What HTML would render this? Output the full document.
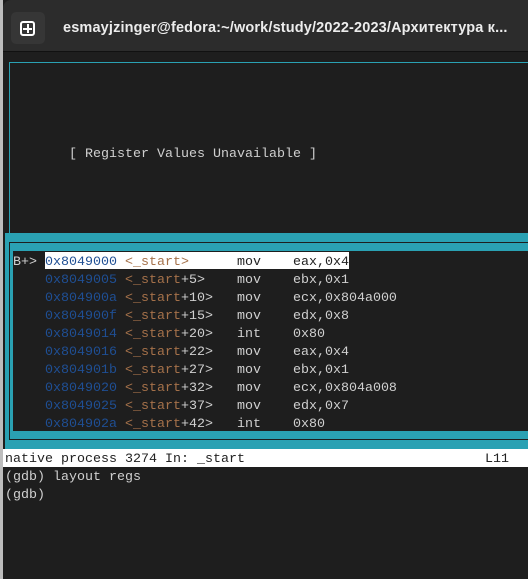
<!DOCTYPE html>
<html><head><meta charset="utf-8"><style>
*{margin:0;padding:0;box-sizing:border-box}
body{width:528px;height:579px;overflow:hidden;background:#1e1e1e;position:relative;font-family:"Liberation Mono",monospace;font-size:13.33px;color:#d0d0d0}
.a{position:absolute}
.ln{position:absolute;height:18px;line-height:18px;white-space:pre;padding-top:2px}
.b{color:#1f4f94}.o{color:#a5714a}
</style></head><body>
<div class="a" style="left:0;top:0;width:3px;height:579px;background:#bdbdbd"></div>
<div class="a" style="left:3px;top:0;width:525px;height:51px;background:#2c2c2c;border-top-left-radius:8px"></div>
<div class="a" style="left:3px;top:51px;width:525px;height:1px;background:#111"></div>
<div class="a" style="left:11px;top:12px;width:34px;height:32px;background:#363636;border-radius:5px"></div>
<div class="a" style="left:20px;top:21px;width:15px;height:15px;border:2px solid #fff;border-radius:3px"></div>
<div class="a" style="left:26.5px;top:24px;width:2px;height:9px;background:#fff"></div>
<div class="a" style="left:23px;top:27.5px;width:9px;height:2px;background:#fff"></div>
<div class="a" style="left:63px;top:20px;font-family:'Liberation Sans','Noto Sans CJK SC',sans-serif;font-size:14.5px;font-weight:bold;letter-spacing:0.15px;color:#ececec;white-space:nowrap">esmayjzinger@fedora:~/work/study/2022-2023/Архитектура к...</div>
<div class="a" style="left:9px;top:62px;width:530px;height:180px;border:1px solid #2aa1b3"></div>
<div class="ln" style="left:69px;top:144px">[ Register Values Unavailable ]</div>
<div class="a" style="left:5px;top:233px;width:523px;height:216px;background:#2aa1b3"></div>
<div class="a" style="left:9px;top:242px;width:530px;height:198px;border:1px solid #1e1e1e"></div>
<div class="a" style="left:13px;top:251px;width:515px;height:180px;background:#1e1e1e"></div>
<div class="a" style="left:45px;top:252px;width:304px;height:17px;background:#fff"></div>
<div class="ln" style="left:13px;top:252px">B+> <span class="b">0x8049000</span> <span class="o">&lt;_start&gt;</span>      <span style="color:#222">mov    eax,0x4</span></div>
<div class="ln" style="left:13px;top:270px">    <span class="b">0x8049005</span> <span class="o">&lt;_start</span>+5&gt;    mov    ebx,0x1</div>
<div class="ln" style="left:13px;top:288px">    <span class="b">0x804900a</span> <span class="o">&lt;_start</span>+10&gt;   mov    ecx,0x804a000</div>
<div class="ln" style="left:13px;top:306px">    <span class="b">0x804900f</span> <span class="o">&lt;_start</span>+15&gt;   mov    edx,0x8</div>
<div class="ln" style="left:13px;top:324px">    <span class="b">0x8049014</span> <span class="o">&lt;_start</span>+20&gt;   int    0x80</div>
<div class="ln" style="left:13px;top:342px">    <span class="b">0x8049016</span> <span class="o">&lt;_start</span>+22&gt;   mov    eax,0x4</div>
<div class="ln" style="left:13px;top:360px">    <span class="b">0x804901b</span> <span class="o">&lt;_start</span>+27&gt;   mov    ebx,0x1</div>
<div class="ln" style="left:13px;top:378px">    <span class="b">0x8049020</span> <span class="o">&lt;_start</span>+32&gt;   mov    ecx,0x804a008</div>
<div class="ln" style="left:13px;top:396px">    <span class="b">0x8049025</span> <span class="o">&lt;_start</span>+37&gt;   mov    edx,0x7</div>
<div class="ln" style="left:13px;top:414px">    <span class="b">0x804902a</span> <span class="o">&lt;_start</span>+42&gt;   int    0x80</div>
<div class="a" style="left:3px;top:449px;width:525px;height:18px;background:#fff"></div>
<div class="ln" style="left:5px;top:449px;color:#222">native process 3274 In: _start</div>
<div class="ln" style="left:485px;top:449px;color:#222">L11</div>
<div class="ln" style="left:5px;top:467px">(gdb) layout regs</div>
<div class="ln" style="left:5px;top:485px">(gdb)</div>
</body></html>
